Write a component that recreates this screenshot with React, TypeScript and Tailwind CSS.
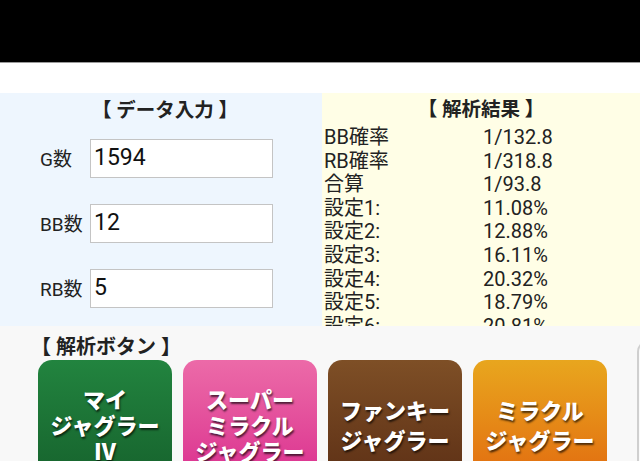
const font = "font-['Roboto','Noto_Sans_CJK_JP',sans-serif]"

const inputs = [
  { label: 'G数', value: '1594' },
  { label: 'BB数', value: '12' },
  { label: 'RB数', value: '5' },
]

const results = [
  ['BB確率', '1/132.8'],
  ['RB確率', '1/318.8'],
  ['合算', '1/93.8'],
  ['設定1:', '11.08%'],
  ['設定2:', '12.88%'],
  ['設定3:', '16.11%'],
  ['設定4:', '20.32%'],
  ['設定5:', '18.79%'],
  ['設定6:', '20.81%'],
]

const buttons = [
  { lines: ['マイ', 'ジャグラー', 'Ⅳ'], bg: 'bg-gradient-to-b from-[#22843f] to-[#155f2b]', lh: 'leading-[26px]' },
  { lines: ['スーパー', 'ミラクル', 'ジャグラー'], bg: 'bg-gradient-to-b from-[#ec6aa8] to-[#d8228c]', lh: 'leading-[26px]' },
  { lines: ['ファンキー', 'ジャグラー'], bg: 'bg-gradient-to-b from-[#7e4f26] to-[#5a2d14]', lh: 'leading-[30px]' },
  { lines: ['ミラクル', 'ジャグラー'], bg: 'bg-gradient-to-b from-[#e8a61e] to-[#e0640e]', lh: 'leading-[30px]' },
]

function InputRow({ label, value }: { label: string; value: string }) {
  return (
    <div className="flex items-center">
      <span className="w-[50px] text-[19px] text-[#222] pt-[3px]">{label}</span>
      <div className="w-[183px] h-[39px] bg-white border border-[#c4c4c4] flex items-center pl-[3px] text-[23px] text-[#111]">
        {value}
      </div>
    </div>
  )
}

export default function App() {
  return (
    <div className={`w-[640px] h-[461px] overflow-hidden flex flex-col ${font}`}>
      <div className="h-[63px] bg-black border-b border-[#9a9a9a] shrink-0" />
      <div className="h-[30px] bg-white shrink-0" />

      <div className="flex h-[233px] shrink-0">
        <div className="w-[322px] bg-[#eef6fe] pt-[6px]">
          <h2 className="h-[24px] leading-[24px] text-center text-[19.5px] font-bold text-[#222] pl-[8px]">【 データ入力 】</h2>
          <div className="flex flex-col gap-[26px] pl-[40px] mt-[16px]">
            {inputs.map(i => <InputRow key={i.label} {...i} />)}
          </div>
        </div>
        <div className="flex-1 bg-[#fffee6] pt-[5px] overflow-hidden">
          <h2 className="h-[24px] leading-[24px] text-center text-[19.5px] font-bold text-[#222]">【 解析結果 】</h2>
          <div className="mt-[4px] pl-[2px]">
            {results.map(([k, v]) => (
              <div key={k} className="flex h-[23.6px] leading-[23.6px] text-[20px] text-[#222]">
                <span className="w-[159px]">{k}</span>
                <span>{v}</span>
              </div>
            ))}
          </div>
        </div>
      </div>

      <div className="flex-1 bg-[#f8f8f8] pt-[9px]">
        <h2 className="h-[24px] leading-[24px] text-[20px] font-bold text-[#222] pl-[31px]">【 解析ボタン 】</h2>
        <div className="flex gap-[11px] pl-[38px] mt-[1px]">
          {buttons.map(b => (
            <div
              key={b.lines.join('')}
              className={`w-[134px] h-[134px] shrink-0 rounded-[14px] ${b.bg} flex flex-col items-center justify-center text-white font-black text-[22px] ${b.lh} [text-shadow:1px_2px_2px_rgba(0,0,0,0.65)]`}
            >
              {b.lines.map(l => <span key={l}>{l}</span>)}
            </div>
          ))}
          <div className="w-[80px] h-[140px] shrink-0 ml-[19px] -mt-[20px] rounded-tl-[12px] border-l-2 border-t border-[#cfcfcf] bg-[#fafafa]" />
        </div>
      </div>
    </div>
  )
}
